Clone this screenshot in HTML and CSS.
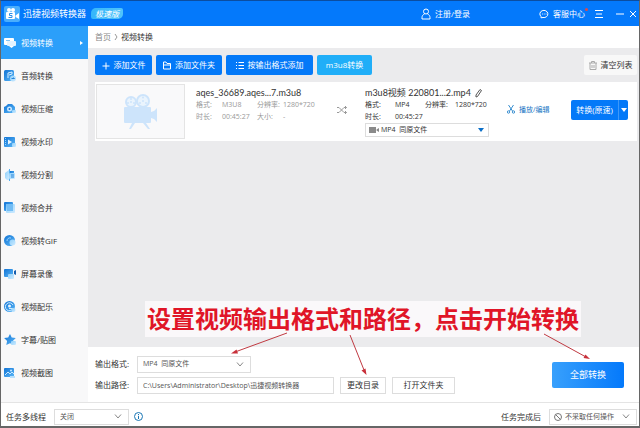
FILE: index.html
```html
<!DOCTYPE html>
<html lang="zh-CN">
<head>
  <meta charset="UTF-8">
  <meta name="viewport" content="width=device-width, initial-scale=1.0">
  <title>迅捷视频转换器</title>
  <link rel="stylesheet" href="styles.css">
</head>
<body>
  <svg width="0" height="0" class="defs" aria-hidden="true">
    <defs>
      <linearGradient id="blue" x1="0" y1="0" x2="1" y2="1">
        <stop offset="0" stop-color="#1173d4"/>
        <stop offset="1" stop-color="#5cb8f8"/>
      </linearGradient>
      <linearGradient id="pale" x1="0" y1="0" x2="1" y2="1">
        <stop offset="0" stop-color="#8fd0fb"/>
        <stop offset="1" stop-color="#cdeaff"/>
      </linearGradient>
    </defs>
  </svg>

  <div class="app">
    <header class="titlebar">
      <svg class="logo" viewBox="0 0 16 16">
        <rect width="16" height="16" rx="2" fill="#4aaefc"/>
        <circle cx="5" cy="4" r="2" fill="#fff"/>
        <circle cx="9" cy="4" r="2" fill="#fff"/>
        <rect x="2" y="6" width="9" height="7" rx="1" fill="#fff"/>
        <path d="M11.500 9.500L15 7v6l-3.500-2z" fill="#fff"/>
        <path d="M8.500 7.500H5.500V9.500H8V11.500H4.500" fill="none" stroke="#2b8fe8"/>
      </svg>
      <h1>迅捷视频转换器</h1>
      <span class="badge">极速版</span>
      <a href="#" class="account">
        <svg viewBox="0 0 10 12"><circle cx="5" cy="3.500" r="2.500"/><path d="M3.500 6C2 6.500 1 8 1 9.500V11H9V9.500C9 8 8 6.500 6.500 6"/></svg>
        注册/登录
      </a>
      <a href="#" class="service">
        <svg viewBox="0 0 10 10"><path d="M2 8.800V7.500A4 3.600 0 1 1 4 8.500z"/><path d="M3 5h.8M4.800 5h.8M6.600 5h.8"/></svg>
        客服中心
        <i class="dot"></i>
      </a>
      <div class="window-buttons">
        <button class="menu" aria-label="菜单"><svg viewBox="0 0 8 8"><path d="M0 .5H8M1 4H7M0 7.500H8"/></svg></button>
        <button aria-label="最小化"><svg viewBox="0 0 8 8"><path d="M0 4H8"/></svg></button>
        <button aria-label="关闭"><svg viewBox="0 0 8 8"><path d="M1 1L7 7M7 1L1 7"/></svg></button>
      </div>
    </header>

    <div class="body">
      <nav class="sidebar">
        <a href="#" class="active">
          <svg viewBox="0 0 12 12"><rect y="1" width="10" height="7" rx="1" fill="#fff"/><rect x="3" y="4" width="9" height="5" rx="1" fill="#e3f3ff"/><path d="M5 9h5l-2.500 2z" fill="#fff"/><path d="M2 3.500h4" stroke="#7fc3f5"/></svg>
          视频转换
          <span class="arrow"></span>
        </a>
        <a href="#">
          <svg viewBox="0 0 12 12"><rect x="0" y="0" width="10" height="11" rx="1.500" fill="url(#blue)"/><path d="M4 8V3l4-1v2L5 5" stroke="#d8efff" fill="none"/><circle cx="9" cy="8.500" r="3" fill="url(#pale)"/><path d="M7.500 8.500h3M9.500 7.500l1 1" stroke="#2684da" fill="none"/></svg>
          音频转换
        </a>
        <a href="#">
          <svg viewBox="0 0 12 12"><path d="M2 3L4 1h4l2 2 1 1v6H0V4z" fill="url(#blue)"/><circle cx="5.500" cy="6" r="2.500" fill="#cfeaff"/><circle cx="5.500" cy="6" r="1" fill="#1678d8"/><rect x="8" y="7" width="4" height="3" rx="1" fill="url(#pale)"/></svg>
          视频压缩
        </a>
        <a href="#">
          <svg viewBox="0 0 12 12"><rect x="0" y="1" width="11" height="10" rx="1" fill="url(#blue)"/><path d="M4 3.500v5L8 6z" fill="#e8f6ff"/><path d="M1.500 2v8" stroke="#9bd4fb" stroke-dasharray="1 1"/><rect x="8" y="7" width="4" height="4" rx="1" fill="url(#pale)"/></svg>
          视频水印
        </a>
        <a href="#">
          <svg viewBox="0 0 12 12"><path d="M5 1v10H3L1 9V4z" fill="url(#pale)"/><path d="M5 2h5v7H5z" fill="url(#blue)"/><path d="M5.500 0v12" stroke="#55aef0"/><rect x="5" y="4" width="6" height="6" rx="1" fill="url(#pale)"/><path d="M7 6h3M7 8h3" stroke="#2684da"/></svg>
          视频分割
        </a>
        <a href="#">
          <svg viewBox="0 0 12 12"><rect x="0" y="0" width="9" height="9" rx="1" fill="url(#blue)"/><rect x="2" y="2" width="9" height="9" rx="1" fill="url(#pale)"/><path d="M2 2h7v7H3z" fill="#72bdf5"/></svg>
          视频合并
        </a>
        <a href="#">
          <svg viewBox="0 0 12 12"><circle cx="5.500" cy="5.500" r="5.500" fill="url(#blue)"/><path d="M7 3A3 3 0 0 0 3 6" stroke="#9dd5fc" fill="none"/><circle cx="8.500" cy="7.500" r="3" fill="url(#pale)"/></svg>
          视频转GIF
        </a>
        <a href="#">
          <svg viewBox="0 0 12 12"><rect x="0" y="1" width="9" height="8" rx="1" fill="url(#blue)"/><path d="M10 3l2-1v5l-2-1z" fill="#175fae"/><rect x="4" y="6" width="6" height="5" rx="1" fill="url(#pale)"/></svg>
          屏幕录像
        </a>
        <a href="#">
          <svg viewBox="0 0 12 12"><circle cx="5.500" cy="5.500" r="5.500" fill="url(#blue)"/><path d="M9 4A4 4 0 1 0 9 7.500H5" stroke="#d0ebff" fill="none"/><circle cx="5.500" cy="5" r="1.500" fill="#e7f5ff"/><circle cx="9.500" cy="9" r="2" fill="url(#pale)"/></svg>
          视频配乐
        </a>
        <a href="#">
          <svg viewBox="0 0 12 12"><path d="M6 0l1.700 3.600 4.100.5-3 2.800.8 4.100L6 9.200 2.300 11l.8-4.100-3-2.800 4.100-.5z" fill="url(#blue)"/><rect x="7" y="7" width="5" height="4" rx="1" fill="url(#pale)"/></svg>
          字幕/贴图
        </a>
        <a href="#">
          <svg viewBox="0 0 12 12"><rect x="0" y="1" width="10" height="9" rx="1" fill="url(#blue)"/><path d="M1 8l3-3 2 2 2-2 2 2" stroke="#c8e8ff" fill="none"/><path d="M6 9h5v2H6z" fill="#b9e0fc"/><circle cx="7" cy="3.500" r="1" fill="#c8e8ff"/></svg>
          视频截图
        </a>
      </nav>

      <main>
        <div class="breadcrumb">
          <a href="#">首页</a>
          <svg viewBox="0 0 4 8"><path d="M1 1L3 4L1 7"/></svg>
          <span>视频转换</span>
        </div>

        <div class="workspace">
          <div class="toolbar">
            <button class="primary add-file"><svg viewBox="0 0 8 8"><path d="M4 1V8M.5 4.500H7.500"/></svg>添加文件</button>
            <button class="primary add-folder"><svg viewBox="0 0 8 8"><path d="M.5 7.500V.5H3l1 1.500h3.500v5.500zM.5 3.500h7"/></svg>添加文件夹</button>
            <button class="primary add-format"><svg viewBox="0 0 8 8"><path d="M0 1H1M2.500 1H8M0 4H1M2.500 4H8M0 7H1M2.500 7H8"/></svg>按输出格式添加</button>
            <button class="primary light">m3u8转换</button>
            <button class="clear"><svg viewBox="0 0 8 9"><path d="M0 2H8M2.500 2V.5h3V2M1 2v6.500h6V2M3 4v3M5 4v3"/></svg>清空列表</button>
          </div>

          <div class="task">
            <div class="thumb">
              <svg viewBox="0 0 34 36">
                <g fill="#cde4fb">
                  <rect x="0" y="13" width="27" height="16" rx="1"/>
                  <path d="M27 18l3-1 3-3v14l-3-3-3-1z"/>
                  <path d="M8 29h3l-4 6H5zM19 29h3l4 6h-2z"/>
                </g>
                <g fill="#eaf4fd" stroke="#cde4fb" stroke-width="2">
                  <circle cx="7" cy="8" r="5"/>
                  <circle cx="19" cy="7" r="6"/>
                </g>
                <g fill="#cde4fb">
                  <circle cx="7" cy="8" r="1"/><circle cx="19" cy="7" r="1"/>
                  <circle cx="7" cy="5" r="1"/><circle cx="4" cy="9" r="1"/><circle cx="10" cy="9" r="1"/>
                  <circle cx="19" cy="3.500" r="1"/><circle cx="16" cy="9" r="1"/><circle cx="22" cy="9" r="1"/>
                </g>
              </svg>
            </div>
            <div class="source">
              <h2>aqes_36689.aqes...7.m3u8</h2>
              <dl>
                <dt>格式:</dt><dd>M3U8</dd><dt>分辨率:</dt><dd>1280*720</dd>
                <dt>时长:</dt><dd>00:45:27</dd><dt>大小:</dt><dd>-</dd>
              </dl>
            </div>
            <svg class="shuffle" viewBox="0 0 10 8"><path d="M0 1.500h2l5 5h2.500M0 6.500h2l5-5h2.500M8 0l1.500 1.500L8 3M8 5l1.500 1.500L8 8"/></svg>
            <div class="target">
              <h2>m3u8视频 220801...2.mp4 <svg viewBox="0 0 7 9"><path d="M1 8V6l4-5.500 1.500 1L2.500 7.500z"/></svg></h2>
              <dl>
                <dt>格式:</dt><dd>MP4</dd><dt>分辨率:</dt><dd>1280*720</dd>
                <dt>时长:</dt><dd>00:45:27</dd>
              </dl>
              <div class="select small">
                <svg class="cam" viewBox="0 0 10 6"><path d="M0 0h7v6H0zM7.500 2.500L10 1v4L7.500 3.500z" fill="#8a8a8a"/></svg>
                <select aria-label="格式"><option>MP4&nbsp; 同原文件</option></select>
                <span class="caret"></span>
              </div>
            </div>
            <a href="#" class="edit">
              <svg viewBox="0 0 8 9"><path d="M1.500 0L5.500 6M6.500 0L2.500 6"/><circle cx="1.500" cy="7" r="1.200"/><circle cx="6.500" cy="7" r="1.200"/></svg>
              播放/编辑
            </a>
            <div class="convert">
              <button class="primary">转换(原速)</button>
              <button class="primary more" aria-label="更多"><span class="caret"></span></button>
            </div>
          </div>

          <div class="note">
            <p>设置视频输出格式和路径，点击开始转换</p>
            <svg viewBox="0 0 436 76" width="436" height="76">
              <g stroke="#c03a42" fill="none">
                <path d="M142 32L90 51M205 34L219 69M399 33L441 56"/>
              </g>
              <path d="M86 52.500l5.500-4 1.500 4zM221.500 74l-5-4.500 4-2zM445 58l-6.500-1 2-3.500z" fill="#c8303a"/>
            </svg>
          </div>
        </div>

        <div class="output">
          <div class="fields">
            <div class="row">
              <label for="format">输出格式:</label>
              <div class="select format">
                <select id="format"><option>MP4&nbsp; 同原文件</option></select>
                <svg class="chevron" viewBox="0 0 8 5"><path d="M1 .5L4 4L7 .5"/></svg>
              </div>
            </div>
            <div class="row">
              <label for="path">输出路径:</label>
              <input type="text" id="path" value="C:\Users\Administrator\Desktop\迅捷视频转换器">
              <button class="change">更改目录</button>
              <button class="open">打开文件夹</button>
            </div>
          </div>
          <button class="convert-all">全部转换</button>
        </div>
      </main>
    </div>

    <footer>
      <label for="threads">任务多线程</label>
      <div class="select threads">
        <select id="threads"><option>关闭</option></select>
        <svg class="chevron" viewBox="0 0 8 5"><path d="M1 .5L4 4L7 .5"/></svg>
      </div>
      <svg class="info" viewBox="0 0 9 9"><circle cx="4.500" cy="4.500" r="4"/><path d="M4.500 2v1M4.500 3.800V7"/></svg>
      <label for="after" class="after-label">任务完成后</label>
      <div class="select after">
        <svg class="ban" viewBox="0 0 8 8"><circle cx="4" cy="4" r="3.500"/><path d="M1.500 1.500L6.500 6.500"/></svg>
        <select id="after"><option>不采取任何操作</option></select>
        <svg class="chevron" viewBox="0 0 8 5"><path d="M1 .5L4 4L7 .5"/></svg>
      </div>
    </footer>
  </div>
</body>
</html>
```
FILE: styles.css
```css
* {
  box-sizing: border-box;
}

body {
  margin: 0;
  font-family: "Open Sans", "Noto Sans CJK SC", sans-serif;
  font-size: 8px;
  line-height: 12px;
  color: #333;
}

h1, h2, p, dl, dd {
  margin: 0;
}

a {
  color: inherit;
  text-decoration: none;
}

button, input, select {
  margin: 0;
  padding: 0;
  border: none;
  border-radius: 0;
  background: none;
  font: inherit;
  color: inherit;
}

svg {
  flex: none;
  fill: none;
  stroke-width: 1;
}

.defs {
  position: absolute;
}

.app {
  display: flex;
  flex-direction: column;
  min-height: 100vh;
  border: 1px solid #666;
  border-top-color: #0b4da0;
  border-bottom-width: 2px;
  background: #fff;
}

/* title bar */
.titlebar {
  display: flex;
  align-items: center;
  height: 25px;
  padding: 0 2px 0 3px;
  background: #0479fb;
  color: #fff;
}

.logo {
  width: 16px;
  height: 16px;
}

h1 {
  margin-left: 3px;
  font-size: 9px;
  font-weight: normal;
}

.badge {
  margin-left: 5px;
  padding: 0 4px;
  border-radius: 5px 2px 5px 2px;
  background: linear-gradient(90deg, #35b6fa, #4fc4fb);
  line-height: 11px;
  font-style: italic;
}

.account, .service {
  display: flex;
  align-items: center;
  gap: 4px;
}

.account {
  margin-left: auto;
}

.account svg, .service svg, .window-buttons svg {
  stroke: #fff;
}

.account svg {
  width: 10px;
  height: 12px;
}

.service {
  position: relative;
  margin-left: 69px;
}

.service svg {
  width: 10px;
  height: 10px;
}

.dot {
  position: absolute;
  top: 0;
  right: -3px;
  width: 3px;
  height: 3px;
  border-radius: 50%;
  background: #e04848;
}

.window-buttons {
  display: flex;
  gap: 5px;
  margin-left: 10px;
}

.window-buttons button {
  display: flex;
}

.window-buttons .menu {
  margin-right: 8px;
}

.window-buttons svg {
  width: 8px;
  height: 8px;
}

.body {
  display: flex;
  flex: 1;
}

/* sidebar */
.sidebar {
  width: 87px;
  background: #f8f8f9;
}

.sidebar a {
  display: flex;
  align-items: center;
  gap: 5px;
  height: 33px;
  padding: 0 5px 0 3px;
}

.sidebar svg {
  width: 12px;
  height: 12px;
}

.sidebar .active {
  background: #2b9ffa;
  color: #fff;
}

.arrow {
  margin-left: auto;
  border: 2px solid transparent;
  border-left: 3px solid #fff;
  border-right: none;
}

/* main */
main {
  display: flex;
  flex: 1;
  flex-direction: column;
  min-width: 0;
}

.breadcrumb {
  display: flex;
  align-items: center;
  gap: 3px;
  height: 22px;
  padding-left: 7px;
}

.breadcrumb a {
  color: #888;
}

.breadcrumb svg {
  width: 4px;
  height: 8px;
  stroke: #999;
}

.workspace {
  display: flex;
  flex: 1;
  flex-direction: column;
  padding: 7px 2px 10px 7px;
  background: #ebebed;
}

.toolbar {
  display: flex;
  gap: 4px;
  margin-bottom: 7px;
}

.primary {
  display: flex;
  align-items: center;
  justify-content: center;
  gap: 4px;
  height: 20px;
  border-radius: 2px;
  background: #0479f8;
  color: #fff;
}

.toolbar svg {
  width: 8px;
  height: 9px;
  stroke: #fff;
}

.add-file {
  width: 57px;
}

.add-folder {
  width: 66px;
}

.add-format {
  width: 87px;
}

.light {
  width: 55px;
  background: #20aef8;
}

.toolbar .clear {
  display: flex;
  align-items: center;
  justify-content: center;
  gap: 4px;
  width: 53px;
  margin-left: auto;
  border-radius: 2px;
  background: #f8f8f8;
}

.clear svg {
  stroke: #aaa;
}

.task {
  display: flex;
  align-items: center;
  height: 59px;
  padding: 0 9px 4px 1px;
  background: #fff;
}

.thumb {
  display: flex;
  flex: none;
  align-items: center;
  align-self: flex-start;
  justify-content: center;
  width: 89px;
  height: 55px;
  margin-top: 2px;
  border: 1px solid #e4e4e4;
  background: #f9f9fa;
}

.thumb svg {
  width: 34px;
  height: 36px;
}

.source, .target {
  align-self: flex-start;
  padding-top: 4px;
}

.source {
  width: 120px;
  margin-left: 11px;
}

h2 {
  font-family: Lato, "Noto Sans CJK SC", sans-serif;
  font-size: 9px;
  font-weight: normal;
  line-height: 13px;
  white-space: nowrap;
}

h2 svg {
  width: 7px;
  height: 9px;
  margin-left: 2px;
  vertical-align: middle;
  stroke: #555;
}

dl {
  display: grid;
  grid-template-columns: 26px 35px 26px 1fr;
  font-size: 7px;
}

.source dl {
  color: #999;
}

.target dl {
  grid-template-columns: 30px 30px 30px 1fr;
}

.shuffle {
  width: 10px;
  height: 8px;
  margin: 0 18px 0 21px;
  stroke: #999;
}

.target {
  width: 124px;
}

.select {
  position: relative;
  display: flex;
  align-items: center;
  border: 1px solid #ddd;
  background: #fff;
  color: #555;
  font-size: 7px;
}

.select select {
  flex: 1;
  height: 100%;
  padding: 0 16px 0 5px;
  appearance: none;
}

.select.small {
  height: 14px;
  color: #333;
}

.select.small select {
  padding-left: 2px;
}

.cam {
  width: 10px;
  height: 6px;
  margin-left: 3px;
}

.caret {
  border: 3px solid transparent;
  border-top: 4px solid #0b6fc8;
  border-bottom: none;
}

.select .caret {
  position: absolute;
  right: 4px;
  pointer-events: none;
}

.chevron {
  position: absolute;
  right: 6px;
  width: 8px;
  height: 5px;
  stroke: #888;
  pointer-events: none;
}

.edit {
  display: flex;
  align-items: center;
  gap: 4px;
  margin-left: 18px;
  color: #1a76c4;
  font-size: 7px;
}

.edit svg {
  width: 8px;
  height: 9px;
  stroke: #3a8fd0;
}

.convert {
  display: flex;
  margin-left: auto;
}

.convert .primary {
  width: 47px;
}

.convert .primary:first-child {
  border-radius: 2px 0 0 2px;
}

.convert .more {
  width: 10px;
  border-left: 1px solid #3d98fa;
  border-radius: 0 2px 2px 0;
}

.more .caret {
  border-top-color: #fff;
}

/* instruction with pointers to the controls below it */
.note {
  position: relative;
  width: 436px;
  margin-top: auto;
  margin-left: 50px;
  background: #faf8fa;
}

.note p {
  color: #e01527;
  font-size: 24px;
  font-weight: bold;
  line-height: 36px;
  text-align: center;
  white-space: nowrap;
}

.note svg {
  position: absolute;
  top: 0;
  left: 0;
  overflow: visible;
  pointer-events: none;
}

/* output settings */
.output {
  display: flex;
  align-items: center;
  justify-content: space-between;
  height: 55px;
  padding: 0 15px 0 7px;
}

.fields {
  display: flex;
  flex-direction: column;
  gap: 4px;
}

.row {
  display: flex;
  align-items: center;
}

.row label {
  width: 42px;
}

.format {
  width: 114px;
  height: 17px;
}

.row input {
  width: 197px;
  height: 17px;
  padding: 0 5px;
  border: 1px solid #ddd;
  color: #555;
  font-size: 7px;
}

.row button {
  height: 17px;
  margin-left: 6px;
  border: 1px solid #ddd;
  background: #fff;
}

.change {
  width: 46px;
}

.open {
  width: 63px;
}

.convert-all {
  width: 72px;
  height: 26px;
  border-radius: 2px;
  background: linear-gradient(90deg, #38a0fc, #0479fb);
  color: #fff;
  font-size: 9px;
}

footer {
  display: flex;
  align-items: center;
  height: 24px;
  padding: 4px 2px 0 5px;
  border-top: 1px solid #e4e4e4;
}

footer .select {
  height: 16px;
}

.threads {
  width: 75px;
  margin-left: 8px;
}

.info {
  width: 9px;
  height: 9px;
  margin-left: 5px;
  stroke: #1a76b4;
}

.after-label {
  margin-left: auto;
}

.after {
  width: 88px;
  margin-left: 8px;
}

.ban {
  width: 8px;
  height: 8px;
  margin-left: 4px;
  stroke: #777;
}

.after select {
  padding-left: 3px;
}
```
